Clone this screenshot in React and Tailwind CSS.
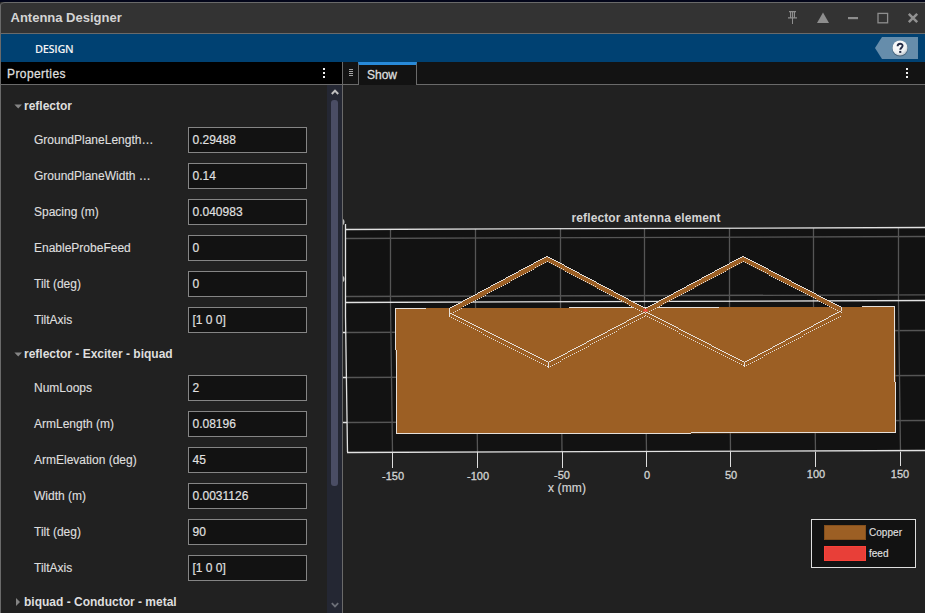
import React from "react";

const groups = [
  {
    title: "reflector",
    open: true,
    rows: [
      ["GroundPlaneLength…", "0.29488"],
      ["GroundPlaneWidth …", "0.14"],
      ["Spacing (m)", "0.040983"],
      ["EnableProbeFeed", "0"],
      ["Tilt (deg)", "0"],
      ["TiltAxis", "[1 0 0]"],
    ],
  },
  {
    title: "reflector - Exciter - biquad",
    open: true,
    rows: [
      ["NumLoops", "2"],
      ["ArmLength (m)", "0.08196"],
      ["ArmElevation (deg)", "45"],
      ["Width (m)", "0.0031126"],
      ["Tilt (deg)", "90"],
      ["TiltAxis", "[1 0 0]"],
    ],
  },
  { title: "biquad - Conductor - metal", open: false, rows: [] },
];

function Kebab() {
  return (
    <svg width="2" height="10" viewBox="0 0 2 10" fill="#f0f0f0" shapeRendering="crispEdges">
      <rect width="2" height="2" />
      <rect y="4" width="2" height="2" />
      <rect y="8" width="2" height="2" />
    </svg>
  );
}

function TitleBar() {
  return (
    <header className="flex h-[32px] shrink-0 items-center justify-between rounded-tl-[4px] border-y border-[#6a6a6a] bg-[#333333] pl-[9.5px]">
      <h1 className="text-[13px] font-bold leading-[30px] text-[#d4d4d4]">Antenna Designer</h1>
      <svg width="140" height="30" viewBox="785 3 140 30" fill="#8e8e8e">
        <path d="M789 11h7v1.200h-1v5h2v1.300h-4v5.500h-1v-5.500h-4v-1.300h2v-5h-1zM791.200 12.200v5h.8v-5zm1.800 0v5h.8v-5z" />
        <path d="M823 12.500l6 10.500h-12z" />
        <rect x="848" y="17" width="10" height="2.200" />
        <rect x="878" y="13.400" width="9.600" height="9.400" fill="none" stroke="#8e8e8e" strokeWidth="1.300" />
        <path d="M908.800 13.800l8.400 8.400m0-8.400l-8.400 8.400" stroke="#929292" strokeWidth="2.500" fill="none" />
      </svg>
    </header>
  );
}

function Ribbon() {
  return (
    <nav className="flex h-[28px] shrink-0 items-center justify-between bg-[#004172] pl-[34px] pr-[7px]">
      <span className="pt-[2px] font-['Open_Sans',sans-serif] text-[11px] font-semibold tracking-[-0.3px] text-[#f2f2f2]">
        DESIGN
      </span>
      <svg width="43" height="22" viewBox="0 0 43 22">
        <defs>
          <radialGradient id="ball" cx="0.4" cy="0.3" r="0.8">
            <stop offset="0" stopColor="#ffffff" />
            <stop offset="0.65" stopColor="#eef1f3" />
            <stop offset="1" stopColor="#aab4bd" />
          </radialGradient>
        </defs>
        <path d="M0 11L7 0H43V22H7z" fill="#668dab" />
        <circle cx="25" cy="11.6" r="7.9" fill="#46647c" />
        <circle cx="25" cy="10.9" r="7.5" fill="url(#ball)" />
        <path d="M22.6 9.200c0-3.300 5-3.200 5-.4 0 1.900-2.300 2-2.300 4" fill="none" stroke="#232b45" strokeWidth="1.900" />
        <rect x="24.2" y="13.9" width="2.1" height="2" fill="#232b45" />
      </svg>
    </nav>
  );
}

function Group({ title, open, rows }) {
  return (
    <section className="shrink-0">
      <div className="flex h-[32px] items-center pl-[13px]">
        <svg width="10" height="8" viewBox="0 0 10 8" fill="#858585" className="shrink-0">
          {open ? <path d="M.4 2.400h7.600L4.200 6.400z" /> : <path d="M2 0l4 4-4 4z" />}
        </svg>
        <h2 className="whitespace-nowrap text-[12px] font-bold leading-[14px] text-[#dedede]">{title}</h2>
      </div>
      {rows.map(([label, value]) => (
        <div key={label} className="flex h-[36px] items-center pl-[33px]">
          <span
            className="w-[154px] whitespace-nowrap text-[12px] leading-[14px] text-[#dedede]"
            style={{ WebkitTextStroke: "0.15px #dedede" }}
          >
            {label}
          </span>
          <div
            className="flex h-[26px] w-[119px] items-center border border-[#858585] bg-[#121212] pl-[3.5px] text-[12px] leading-[14px] text-[#e2e2e2]"
            style={{ WebkitTextStroke: "0.15px #e2e2e2" }}
          >
            {value}
          </div>
        </div>
      ))}
    </section>
  );
}

function Properties() {
  return (
    <aside className="flex w-[342px] shrink-0 flex-col border-r border-[#6a6a6a]">
      <div className="flex h-[23px] shrink-0 items-center justify-between border-b border-[#6a6a6a] bg-black pl-[6px] pr-[17px]">
        <span
          className="pt-[2px] text-[12px] leading-[14px] tracking-[0.42px] text-[#dedede]"
          style={{ WebkitTextStroke: "0.3px #dedede" }}
        >
          Properties
        </span>
        <Kebab />
      </div>
      <div className="flex min-h-0 flex-1">
        <div className="flex min-w-0 flex-1 flex-col overflow-hidden pt-[5px]">
          {groups.map((g) => (
            <Group key={g.title} {...g} />
          ))}
        </div>
        <div className="flex w-[15px] shrink-0 flex-col items-center bg-[#242733]">
          <svg width="8" height="15" viewBox="0 0 8 15" className="shrink-0">
            <path d="M.8 9L4 5.600l3.200 3.400" fill="none" stroke="#c0c0c0" strokeWidth="2" />
          </svg>
          <div className="h-[386px] w-[7px] shrink-0 rounded-[3px] bg-[#4a4d64]" />
          <div className="flex-1" />
          <svg width="8" height="12" viewBox="0 0 8 12" className="shrink-0">
            <path d="M.8 2.200L4 5.400l3.200-3.200" fill="none" stroke="#6c6f78" strokeWidth="1.800" />
          </svg>
        </div>
      </div>
    </aside>
  );
}

// x at the top wall, x at the floor, top y, tick end y, label, label x, label baseline
const columns = [
  [390.5, 392.5, 229, 468, "-150", 393, 480],
  [475.5, 477.5, 229, 468, "-100", 478, 480],
  [560.5, 562, 228, 468, "-50", 562, 479],
  [644.5, 646.5, 228, 467, "0", 647, 479],
  [729.5, 730.5, 228, 467, "50", 731, 479],
  [813.5, 815.5, 228, 467, "100", 816, 478],
  [898.5, 900.5, 228, 466, "150", 900, 478],
];

// Polyline drawn as one-pixel cells; step 2 leaves every other column empty.
function cells(points, step) {
  let d = "";
  for (let i = 0; i + 1 < points.length; i++) {
    const [x1, y1] = points[i];
    const [x2, y2] = points[i + 1];
    for (let x = x1; x <= x2; x += step) {
      const y = Math.round(y1 + ((y2 - y1) * (x - x1)) / (x2 - x1));
      d += `M${x} ${y}h1v1h-1z`;
    }
  }
  return d;
}

const solidEdges = [
  [[449, 308], [546, 256], [547, 256], [645, 308], [742, 256], [743, 256], [841, 307]],
  [[449, 312], [548, 362], [645, 311], [744, 362], [841, 310]],
];
const dottedEdges = [
  [[449, 314], [547, 261], [645, 313], [743, 261], [841, 312]],
  [[449, 316], [548, 367], [645, 315], [744, 366], [841, 315]],
];

function Plot() {
  return (
    <svg
      width="582"
      height="528"
      viewBox="343 85 582 528"
      className="block bg-[#212121] font-['Liberation_Sans',Arial,sans-serif]"
    >
      <path d="M345 229L925 227V450.500L347 452.500z" fill="#121212" />
      <g stroke="#555555" strokeWidth="1.3">
        <path d="M346 238.500L925 236.500M346 296.500L925 294.800M346 332.500L925 330.500M347 377.500L925 375.500M347 422.500L925 420.500" />
        {columns.map(([a, b, y]) => (
          <path key={a} d={`M${a} ${y}V302L${b} 452`} />
        ))}
      </g>
      <g fill="none" stroke="#e2e2e2" strokeWidth="1.3">
        <path d="M345.500 224V316L347.500 452" />
        <path d="M345 229.500L925 227.500M345 302.500L925 300.500M347 452.500L925 450.500" />
        <path d="M343 332.500h3M343 377.500h4M343 422.500h4" />
      </g>
      <g fill="none" stroke="#dedede" shapeRendering="crispEdges">
        {columns.map(([a, b, , y2]) => (
          <path key={a} d={`M${Math.floor(b) + 0.5} 452V${y2}`} />
        ))}
      </g>
      <path d="M343 219c2 1 2 5 0 6zM343 276c2 1 2 5 0 6z" fill="#bcbcbc" />

      <path d="M395 308L569 308V307L862 307V306H895L896 433L397 434z" fill="#9c5f24" />
      <g fill="none" stroke="#e6e0da" strokeWidth="1" shapeRendering="crispEdges">
        <path d="M395 308.500H426M569 307.500H719M862 306.500H894" />
        <path d="M395.500 308V350M396.500 350V434M894.500 306V382M895.500 382V433" />
        <path d="M397 433.500H691M691 432.500H896" />
      </g>

      <path
        d="M449.500 308.500L547 256.500L645.500 308.500L743 256.500L841.500 307.500V312.500L743.500 261.800L645.500 314L547.500 261.800L449.500 314z"
        fill="#9c5f24"
      />
      <g fill="#e6e0da" shapeRendering="crispEdges">
        {solidEdges.map((p, i) => (
          <path key={i} d={cells(p, 1)} />
        ))}
        {dottedEdges.map((p, i) => (
          <path key={i} d={cells(p, 2)} />
        ))}
        <path d="M449 308h1v9h-1zM548 362h1v5h-1zM744 362h1v5h-1zM645 307h1v4h-1zM841 307h1v4h-1z" />
      </g>
      <path d="M644 309h3l.8 2.500h-4.600z" fill="#f04438" />

      <g fill="#d4d4d4" textAnchor="middle">
        <text x="646" y="221.500" fontSize="12" fontWeight="bold" textLength="149">
          reflector antenna element
        </text>
        <g fontSize="11" stroke="#d4d4d4" strokeWidth="0.3">
          {columns.map(([, , , , label, x, y]) => (
            <text key={label} x={x} y={y}>
              {label}
            </text>
          ))}
        </g>
        <text x="567" y="492" fontSize="12" textLength="38" stroke="#d4d4d4" strokeWidth="0.2">
          x (mm)
        </text>
      </g>

      <rect x="811.500" y="519.500" width="104" height="48" fill="#121212" stroke="#dedede" />
      <rect x="824.500" y="525.500" width="41" height="14" fill="#9c5f24" stroke="#85501d" />
      <rect x="824.500" y="546.500" width="41" height="14" fill="#e83f38" stroke="#fc4138" />
      <g fill="#dedede" fontSize="10" stroke="#dedede" strokeWidth="0.2">
        <text x="869" y="536" textLength="33">Copper</text>
        <text x="869" y="557" textLength="19.500">feed</text>
      </g>
    </svg>
  );
}

function Figure() {
  return (
    <main className="flex min-w-0 flex-1 flex-col">
      <div className="flex h-[23px] shrink-0 bg-[#131313]">
        <div className="flex w-[15px] items-start justify-center border-b border-[#6a6a6a] pt-[7px]">
          <svg width="4" height="8" viewBox="0 0 4 8" shapeRendering="crispEdges">
            <path d="M0 .5h4M0 2.500h4M0 4.500h4M0 6.500h4" stroke="#a5a5a5" />
          </svg>
        </div>
        <div
          className="w-[59px] border-x border-t-[3px] border-x-[#6a6a6a] border-t-[#288ad9] bg-[#121212] pl-[8px] pt-[1px] text-[12px] leading-[19px] text-[#dedede]"
          style={{ WebkitTextStroke: "0.3px #dedede" }}
        >
          Show
        </div>
        <div className="flex flex-1 items-center justify-end border-b border-[#6a6a6a] pr-[17px]">
          <Kebab />
        </div>
      </div>
      <Plot />
    </main>
  );
}

export default function App() {
  return (
    <div className="flex h-[613px] w-[925px] flex-col overflow-hidden bg-[#212121] font-['Liberation_Sans',Arial,sans-serif]">
      <div className="h-[2px] shrink-0 bg-[#03061a]" />
      <div className="flex min-h-0 flex-1 flex-col rounded-tl-[4px] border-l border-[#6a6a6a]">
        <TitleBar />
        <Ribbon />
        <div className="flex min-h-0 flex-1">
          <Properties />
          <Figure />
        </div>
      </div>
    </div>
  );
}
